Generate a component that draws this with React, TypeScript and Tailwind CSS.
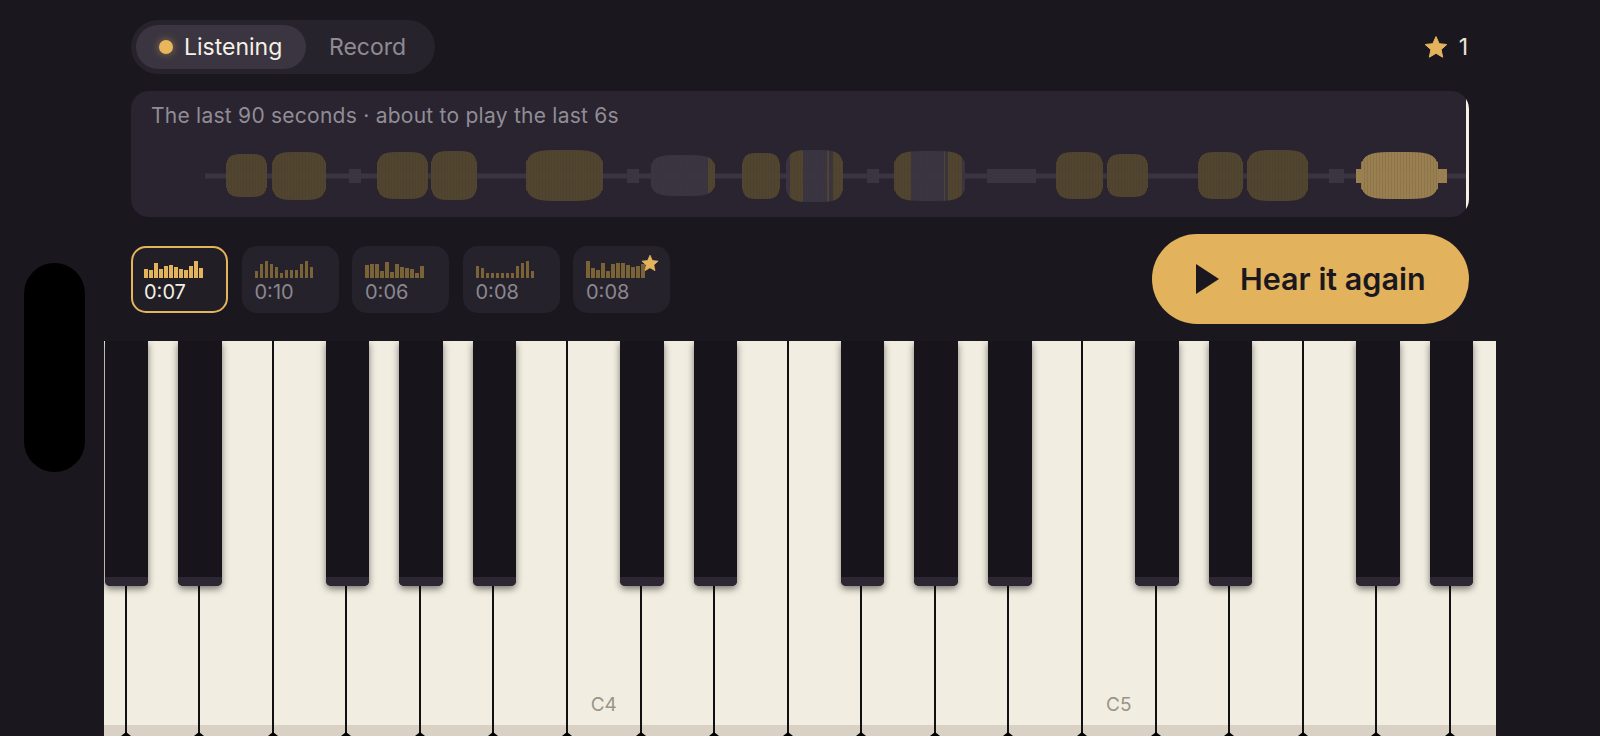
import React from "react";

const GOLD = "#e4b45c";
type Blob = { x1: number; x2: number; y1: number; y2: number; kind?: "gold" | "bright"; grayRanges?: [number, number][] };

const blobs: Blob[] = [
  { x1: 226, x2: 267, y1: 154, y2: 197 },
  { x1: 272, x2: 326, y1: 152, y2: 200 },
  { x1: 377, x2: 428, y1: 152, y2: 199 },
  { x1: 431, x2: 477, y1: 151, y2: 200 },
  { x1: 526, x2: 603, y1: 150, y2: 201 },
  { x1: 651, x2: 715, y1: 155, y2: 196, grayRanges: [[651, 708]] },
  { x1: 742, x2: 780, y1: 153, y2: 199 },
  { x1: 786, x2: 843, y1: 150, y2: 202, grayRanges: [[786, 790], [803, 827], [829, 833]] },
  { x1: 894, x2: 965, y1: 151, y2: 201, grayRanges: [[911, 944], [945, 948], [962, 965]] },
  { x1: 1056, x2: 1103, y1: 152, y2: 199 },
  { x1: 1107, x2: 1148, y1: 154, y2: 197 },
  { x1: 1198, x2: 1243, y1: 152, y2: 199 },
  { x1: 1247, x2: 1308, y1: 150, y2: 201 },
  { x1: 1361, x2: 1438, y1: 152, y2: 199, kind: "bright" },
];

const squares: [number, number][] = [
  [349, 361],
  [627, 639],
  [867, 879],
  [987, 1036],
  [1329, 1344],
];

function Waveform() {
  const bars: React.ReactNode[] = [];
  blobs.forEach((b, i) => {
    const w = b.x2 - b.x1;
    const h = b.y2 - b.y1;
    const cy = (b.y1 + b.y2) / 2;
    for (let x = b.x1; x < b.x2; x += 1) {
      const u = Math.min(0.97, Math.abs(((x + 0.5 - b.x1) / w) * 2 - 1));
      const env = Math.pow(1 - Math.pow(u, 4), 1 / 4);
      const bh = h * env;
      const gray = b.grayRanges?.some(([a, c]) => x >= a && x < c);
      const base = gray ? "#3a3541" : b.kind === "bright" ? "#9a8050" : "#524530";
      const stripe = (x + i) % 3 === 0 ? 0.88 : 1;
      bars.push(<rect key={`${i}-${x}`} x={x} y={cy - bh / 2} width={1} height={bh} fill={base} opacity={stripe} />);
    }
  });
  return (
    <svg viewBox="131 140 1338 70" className="block w-[1338px] h-[70px]">
      <rect x={205} y={173.5} width={1261} height={5} fill="#3a3541" />
      {squares.map(([a, c]) => (
        <rect key={a} x={a} y={169} width={c - a} height={14} fill="#3a3541" />
      ))}
      <rect x={1356} y={169} width={6} height={14} fill="#9a8050" />
      <rect x={1437} y={169} width={10} height={14} fill="#9a8050" />
      {bars}
    </svg>
  );
}

function Star({ className }: { className: string }) {
  return (
    <svg viewBox="0 0 24 24" className={className} fill={GOLD}>
      <path
        d="M12 1.6l3.2 7.1 7.6.8-5.7 5.1 1.6 7.6L12 18.3l-6.7 3.9 1.6-7.6L1.2 9.5l7.6-.8z"
        stroke={GOLD}
        strokeWidth="1"
        strokeLinejoin="round"
      />
    </svg>
  );
}

const clips = [
  { t: "0:07", h: [9, 8, 15, 9, 12, 13, 11, 9, 8, 12, 17, 10], active: true },
  { t: "0:10", h: [7, 14, 17, 14, 11, 5, 8, 8, 8, 14, 17, 11] },
  { t: "0:06", h: [13, 14, 14, 7, 16, 6, 14, 11, 10, 9, 5, 12] },
  { t: "0:08", h: [12, 10, 5, 5, 5, 5, 5, 5, 12, 15, 17, 7] },
  { t: "0:08", h: [17, 10, 8, 15, 7, 14, 15, 15, 13, 11, 12, 14], star: true },
];

function Clip({ c }: { c: (typeof clips)[number] }) {
  return (
    <div
      className={
        "relative w-[97px] h-[67px] rounded-[15px] flex flex-col " +
        (c.active
          ? "border-2 border-[#e4b45c] pl-[11px] pt-[13px] bg-[#211e26]"
          : "bg-[#26222b] pl-[13px] pt-[15px]")
      }
    >
      <div className="flex items-end gap-[1.5px] h-[17px]">
        {c.h.map((v, i) => (
          <div
            key={i}
            className={"w-[3.5px] " + (c.active ? "bg-[#e4b45c]" : "bg-[#7b6338]")}
            style={{ height: v }}
          />
        ))}
      </div>
      <div className={"mt-[1px] text-[20px] leading-[26px] " + (c.active ? "text-[#f3eee2]" : "text-[#8b8790]")}>{c.t}</div>
      {c.star && <Star className="absolute right-[11px] top-[8px] w-[18px] h-[18px]" />}
    </div>
  );
}

const PITCH = 73.6;
const blackIdx = [0, 1, 3, 4, 5, 7, 8, 10, 11, 12, 14, 15, 17, 18];
const whites = Array.from({ length: 20 }, (_, i) => i);

function WhiteKey({ i }: { i: number }) {
  const first = i === 0;
  const last = i === 19;
  const label = i === 7 ? "C4" : i === 14 ? "C5" : "";
  return (
    <div
      className={
        "relative h-full flex flex-col bg-[#f2ede1] " +
        (first ? "w-[22.5px] " : last ? "w-[45px] " : "w-[73.6px] ") +
        (last ? "" : "border-r-2 border-[#111013]")
      }
    >
      <div className="flex-1 flex items-end justify-center pb-[9px]">
        {label && <span className="text-[19px] leading-[22px] text-[#9a9488]">{label}</span>}
      </div>
      <div className="h-[11px] bg-[#d9d2c4]" />
      {!last && (
        <svg viewBox="0 0 10 4" className="absolute z-10 right-[-6px] bottom-0 w-[10px] h-[4px]">
          <path d="M0 4L5 0l5 4z" fill="#000" />
        </svg>
      )}
    </div>
  );
}

export default function App() {
  return (
    <div
      className="relative w-[1600px] h-[736px] overflow-hidden bg-[#1a181e] flex flex-col"
      style={{ fontFamily: "Inter, 'Noto Sans', sans-serif" }}
    >
      <div className="absolute left-[24px] top-[263px] w-[61px] h-[209px] rounded-full bg-black" />

      <div className="pl-[131px] pr-[131px] pt-[20px] flex flex-col">
        <div className="flex items-center justify-between h-[54px]">
          <div className="flex items-center h-[54px] w-[304px] p-[5px] rounded-full bg-[#27232c]">
            <div className="flex items-center h-[44px] w-[170px] rounded-full bg-[#3a3540] pl-[23px]">
              <span className="w-[14px] h-[14px] rounded-full bg-[#e9b65c] shadow-[0_0_8px_rgba(233,182,92,0.5)]" />
              <span className="ml-[11px] text-[23px] text-[#f5f1e6]">Listening</span>
            </div>
            <span className="ml-[23px] text-[23px] text-[#8f8b93]">Record</span>
          </div>
          <div className="flex items-center pr-[1px]">
            <Star className="w-[24px] h-[24px]" />
            <span className="ml-[11px] text-[23px] text-[#e9e5da]">1</span>
          </div>
        </div>

        <div className="relative mt-[17px] h-[126px] rounded-[18px] bg-[#29242f] overflow-hidden">
          <div className="pl-[20px] pt-[10px] text-[21px] leading-[30px] text-[#918d96] tracking-[0.25px]">
            The last 90 seconds · about to play the last 6s
          </div>
          <div className="absolute left-0 top-[49px]">
            <Waveform />
          </div>
          <div className="absolute right-0 top-0 bottom-0 w-[3px] bg-[#f5f1e6]" />
        </div>

        <div className="mt-[17px] flex items-center justify-between h-[90px]">
          <div className="flex items-center gap-[13.5px] mt-[1px]">
            {clips.map((c, i) => (
              <Clip key={i} c={c} />
            ))}
          </div>
          <div className="w-[317px] h-[90px] rounded-[45px] bg-[#e3b25c] flex items-center pl-[44px]">
            <svg viewBox="0 0 23 30" className="w-[23px] h-[30px]">
              <path d="M0 0L23 15L0 30z" fill="#1a181e" />
            </svg>
            <span className="ml-[21px] text-[30.5px] font-semibold text-[#1a181e]">Hear it again</span>
          </div>
        </div>
      </div>

      <div className="relative mt-[17px] ml-[104px] w-[1392px] flex-1 flex overflow-hidden">
        {whites.map((i) => (
          <WhiteKey key={i} i={i} />
        ))}
        {blackIdx.map((k) => (
          <div
            key={k}
            className="absolute z-20 top-0 w-[43.5px] h-[245px] rounded-b-[5px] bg-[#17151b] flex flex-col justify-end shadow-[0_3px_7px_rgba(0,0,0,0.5)]"
            style={{ left: PITCH * k + 0.8 }}
          >
            <div className="h-[9px] rounded-b-[5px] bg-[#2c2733]" />
          </div>
        ))}
      </div>
    </div>
  );
}
